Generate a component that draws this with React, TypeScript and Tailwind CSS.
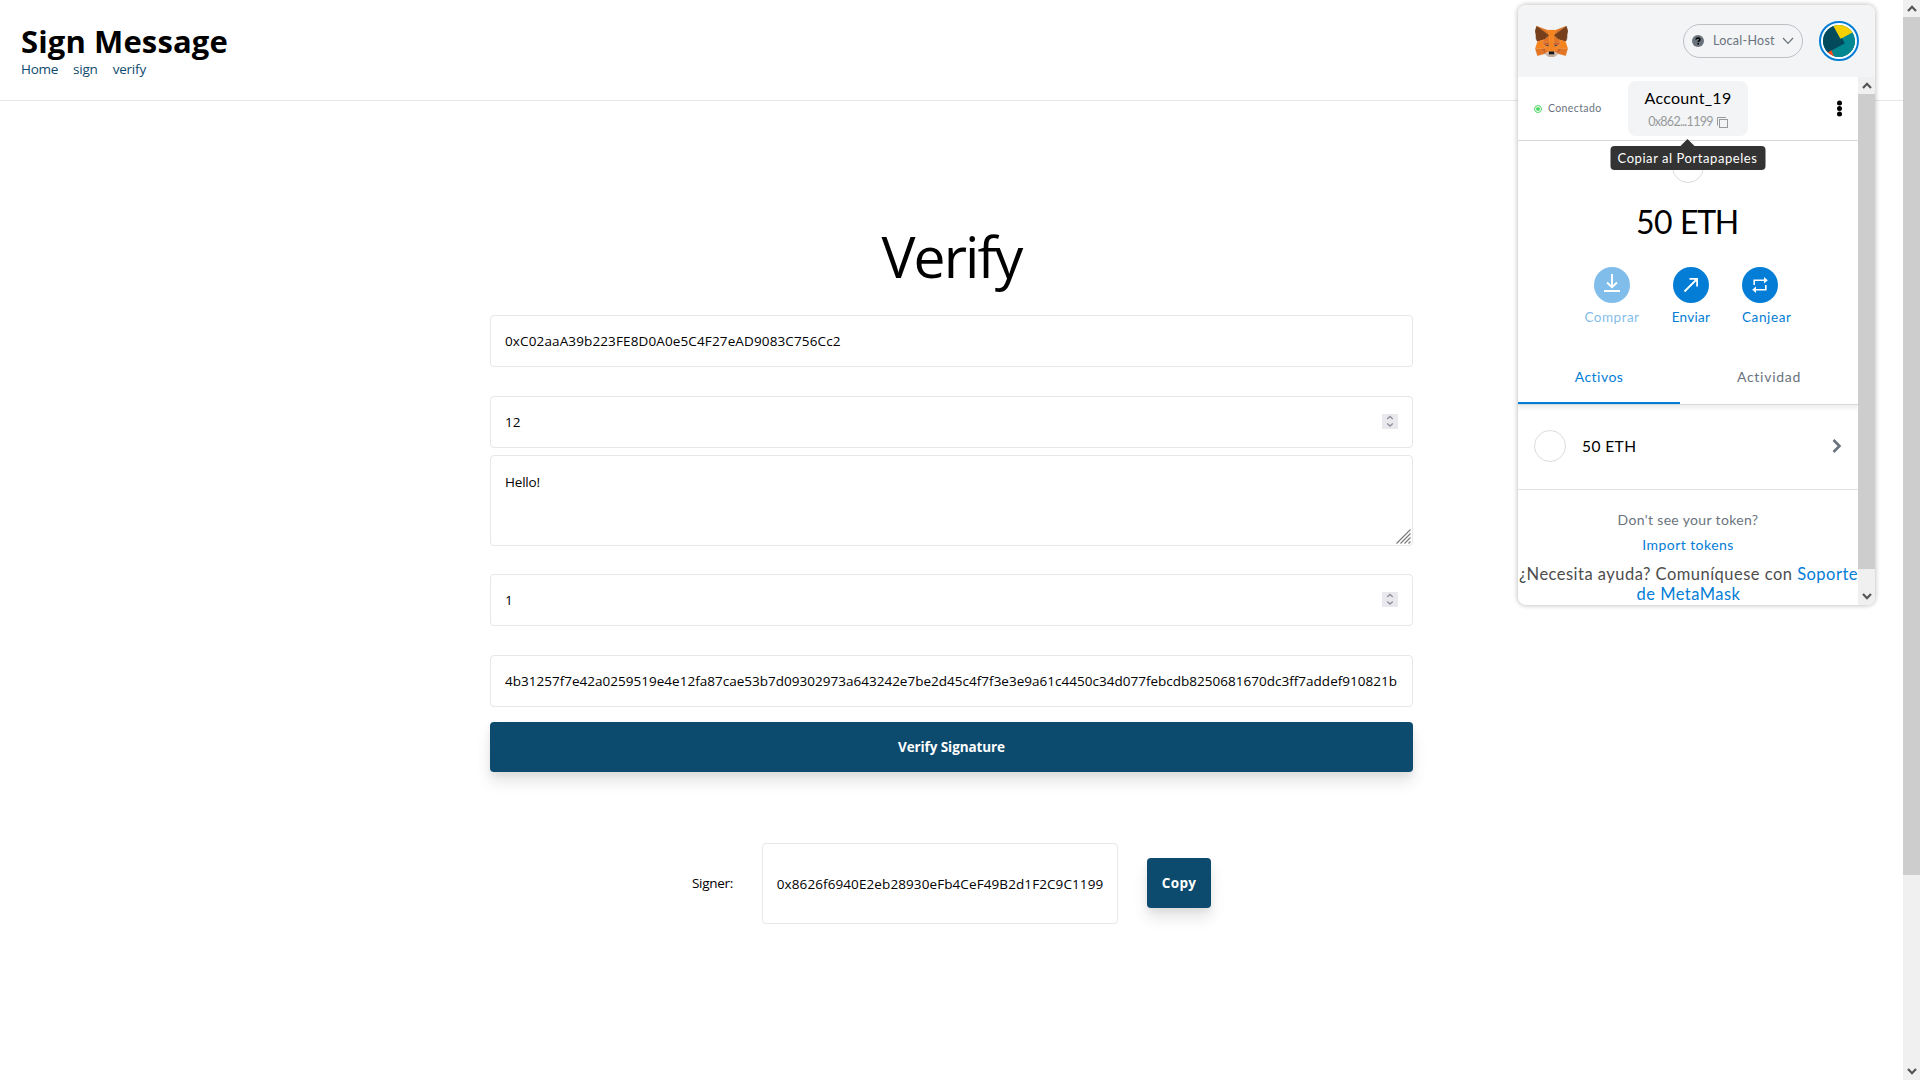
import type { ReactNode } from "react";

function Chevron({ up = false, className = "" }: { up?: boolean; className?: string }) {
  return (
    <svg viewBox="0 0 10 7" className={`h-[7px] w-[10px] shrink-0 ${className}`} fill="none" stroke="#555555" strokeWidth="2.2">
      <path d={up ? "M1 6 L5 1.8 L9 6" : "M1 1 L5 5.2 L9 1"} />
    </svg>
  );
}

function Scrollbar({ thumb, className = "" }: { thumb: string; className?: string }) {
  return (
    <div className={`flex w-[17px] shrink-0 flex-col bg-[#f0f0f0] ${className}`}>
      <div className="flex h-[17px] items-center justify-center">
        <Chevron up />
      </div>
      <div className={`bg-[#cdcdcd] ${thumb}`} />
      <div className="flex-1" />
      <div className="flex h-[17px] items-center justify-center">
        <Chevron />
      </div>
    </div>
  );
}

function Field({ children, spinner = false, className = "" }: { children: ReactNode; spinner?: boolean; className?: string }) {
  return (
    <div className={`flex h-[52px] items-center justify-between rounded border border-gray-200 pr-[14px] pl-[14px] ${className}`}>
      {children}
      {spinner && (
        <div className="mb-px flex h-[15px] w-4 items-center justify-center bg-[#e9e9ed]">
          <svg viewBox="0 0 16 15" className="h-[15px] w-4" fill="none" stroke="#8f8f9d" strokeWidth="1.3">
            <path d="M5.2 5 L8 2.4 L10.8 5 M5.2 9.4 L8 12 L10.8 9.4" />
          </svg>
        </div>
      )}
    </div>
  );
}

const foxShapes: [string, string][] = [
  ["#e17726", "M32.958 1 19.824 10.718 22.267 4.991Z"],
  ["#e27625", "M2.663 1 15.681 10.809 13.357 4.991Z"],
  ["#e27625", "M28.23 23.534 24.733 28.872 32.22 30.932 34.37 23.65Z"],
  ["#e27625", "M1.273 23.65 3.41 30.932 10.897 28.872 7.4 23.534Z"],
  ["#e27625", "M10.471 14.515 8.392 17.651 15.814 17.988 15.562 9.99Z"],
  ["#e27625", "M25.151 14.515 19.988 9.904 19.824 17.988 27.236 17.651Z"],
  ["#e27625", "M10.873 28.872 15.355 26.704 11.497 23.707Z"],
  ["#e27625", "M20.266 26.704 24.736 28.872 24.125 23.707Z"],
  ["#d5bfb2", "M24.735 28.872 20.265 26.704 20.628 29.607 20.589 30.839Z"],
  ["#d5bfb2", "M10.873 28.872 15.032 30.839 15.006 29.607 15.343 26.704Z"],
  ["#233447", "M15.109 21.784 11.383 20.696 14.015 19.49Z"],
  ["#233447", "M20.512 21.784 21.607 19.49 24.251 20.696Z"],
  ["#cc6228", "M10.873 28.872 11.522 23.534 7.4 23.65Z"],
  ["#cc6228", "M24.099 23.534 24.734 28.872 28.23 23.65Z"],
  ["#cc6228", "M27.237 17.651 19.824 17.988 20.512 21.784 21.606 19.49 24.251 20.696Z"],
  ["#cc6228", "M11.383 20.696 14.015 19.49 15.109 21.784 15.814 17.988 8.392 17.651Z"],
  ["#e27525", "M8.392 17.651 11.497 23.707 11.396 20.696Z"],
  ["#e27525", "M24.251 20.696 24.125 23.707 27.237 17.651Z"],
  ["#e27525", "M15.814 17.988 15.109 21.784 15.982 26.298 16.177 20.351Z"],
  ["#e27525", "M19.824 17.988 19.461 20.338 19.636 26.298 20.512 21.784Z"],
  ["#f5841f", "M20.512 21.784 19.636 26.298 20.265 26.704 24.125 23.707 24.251 20.696Z"],
  ["#f5841f", "M11.383 20.696 11.497 23.707 15.355 26.704 15.982 26.298 15.109 21.784Z"],
  ["#c0ac9d", "M20.589 30.839 20.628 29.607 20.291 29.322H15.319L15.006 29.607 15.032 30.839 10.873 28.872 12.326 30.061 15.28 32.1H20.343L23.31 30.061 24.736 28.872Z"],
  ["#161616", "M20.265 26.704 19.636 26.298H15.982L15.355 26.704 15.006 29.607 15.319 29.322H20.291L20.628 29.607Z"],
  ["#763e1a", "M33.517 11.353 34.621 5.986 32.958 1 20.265 10.394 25.151 14.515 32.05 16.525 33.569 14.747 32.907 14.267 33.962 13.307 33.154 12.684 34.21 11.878Z"],
  ["#763e1a", "M1 5.986 2.117 11.353 1.4 11.878 2.468 12.684 1.656 13.307 2.714 14.267 2.052 14.747 3.572 16.525 10.471 14.515 15.355 10.394 2.663 1Z"],
  ["#f5841f", "M32.05 16.525 25.151 14.515 27.237 17.651 24.125 23.707 28.23 23.655H34.37Z"],
  ["#f5841f", "M10.471 14.515 3.572 16.525 1.273 23.655H7.4L11.497 23.707 8.392 17.651Z"],
  ["#f5841f", "M19.824 17.988 20.265 10.394 22.267 4.991H13.357L15.355 10.394 15.814 17.988 15.982 20.364 15.995 26.298H19.636L19.649 20.364Z"],
];

function Fox() {
  return (
    <svg viewBox="1 1 33.6 31.1" preserveAspectRatio="none" className="h-[31px] w-[33px]">
      {foxShapes.map(([fill, d]) => (
        <path key={d} d={d} fill={fill} stroke={fill} strokeWidth="0.2" strokeLinejoin="round" />
      ))}
    </svg>
  );
}

function Avatar() {
  return (
    <div className="flex size-10 items-center justify-center rounded-full border-2 border-[#037dd6] bg-white">
      <svg viewBox="0 0 32 32" className="size-8 rounded-full">
        <rect width="32" height="32" fill="#018790" />
        <path d="M9 -1 L17.5 14 L34 5 V-2 Z" fill="#f5d000" />
        <path d="M3 27 L9 24 L13 34 H3 Z" fill="#fc4a14" />
        <path d="M10 0.5 L17.3 14 L18.8 13.3 L21.6 18.2 L5 27.2 L-2 28 V-2 H9 Z" fill="#034a5c" />
        <path d="M8.5 25.4 L32 13 V34 H12 Z" fill="#018790" />
        <path d="M18.8 13.3 L21.6 18.2 L8.5 25.4 L5 20 Z" fill="#034a5c" />
      </svg>
    </div>
  );
}

function Action({ label, icon, className }: { label: string; icon: ReactNode; className: string }) {
  return (
    <div className={`flex flex-col text-[13.5px] leading-5 text-[#037dd6] ${className}`}>
      <div className="flex size-9 items-center justify-center rounded-full bg-[#037dd6]">{icon}</div>
      <span className="mt-[4px] whitespace-nowrap">{label}</span>
    </div>
  );
}

function Wallet() {
  return (
    <div className="absolute top-[5px] left-[1518px] flex h-[600px] w-[357px] flex-col overflow-hidden rounded-lg bg-white font-['Lato',sans-serif] shadow-[0_0_4px_1px_rgba(0,0,0,0.22)]">
      <div className="flex h-[72px] shrink-0 items-center bg-[#f2f4f6] pr-4 pl-[17px]">
        <Fox />
        <div className="ml-auto flex h-[34px] w-[120px] items-center rounded-full border border-[#bbc0c5]">
          <svg viewBox="0 0 12 12" className="ml-2 size-3">
            <circle cx="6" cy="6" r="6" fill="#6a737d" />
            <path d="M4.1 4.6 C4.1 2.6 7.9 2.6 7.9 4.7 C7.9 5.9 6.2 5.9 6.2 7.1 M6.2 8.1 V9.5" fill="none" stroke="#000" strokeWidth="1.5" />
          </svg>
          <span className="mt-px ml-[9px] text-[12.5px] tracking-[0.27px] text-[#6a737d]">Local-Host</span>
          <svg viewBox="0 0 12 8" className="ml-[7px] h-2 w-3" fill="none" stroke="#6a737d" strokeWidth="1.2">
            <path d="M1 1 L6 6.4 L11 1" />
          </svg>
        </div>
        <div className="ml-4">
          <Avatar />
        </div>
      </div>

      <div className="flex min-h-0 flex-1">
        <div className="flex w-[340px] flex-col overflow-hidden">
          <div className="relative z-10 grid h-[64px] shrink-0 grid-cols-[110px_120px_110px] border-b border-[#d6d9dc]">
            <div className="flex items-center pl-4">
              <span className="flex size-2 items-center justify-center rounded-full border border-[#4cd964]">
                <span className="size-1 rounded-full bg-[#4cd964]" />
              </span>
              <span className="ml-[6px] text-[10.5px] tracking-[0.38px] text-[#6a737d]">Conectado</span>
            </div>
            <div className="relative mt-1 flex h-[55px] flex-col items-center rounded-lg bg-[#f2f4f6]">
              <span className="mt-[7px] text-[16px] leading-5 tracking-[0.29px] text-black">Account_19</span>
              <span className="mt-[5px] flex items-center text-[12.5px] leading-4 text-[#989a9b]">
                <span className="mt-px tracking-[-0.72px]">0x862...1199</span>
                <svg viewBox="0 0 11 11" className="mt-[2px] ml-1 size-[11px]" fill="none" stroke="#989a9b">
                  <path d="M0.5 8.5 V0.5 H9" />
                  <rect x="2.5" y="2.5" width="8" height="8" />
                </svg>
              </span>
              <div className="absolute top-[58px] left-[calc(50%-0.5px)] flex -translate-x-1/2 flex-col items-center">
                <div className="h-0 w-0 border-x-[7px] border-b-[7px] border-x-transparent border-b-[#333333]" />
                <div className="flex h-6 w-[155px] items-center justify-center rounded bg-[#333333] pt-px text-[13px] tracking-[0.56px] whitespace-nowrap text-white">
                  Copiar al Portapapeles
                </div>
              </div>
            </div>
            <div className="flex items-center justify-end pr-4">
              <svg viewBox="0 0 5 17" className="h-[17px] w-[5px]">
                <circle cx="2.5" cy="2.9" r="2.5" />
                <circle cx="2.5" cy="8.5" r="2.5" />
                <circle cx="2.5" cy="14.1" r="2.5" />
              </svg>
            </div>
          </div>

          <div className="flex h-[264px] shrink-0 flex-col items-center">
            <div className="mt-[10px] size-8 rounded-full border border-[#dcdcdc]" />
            <div className="mt-[19px] mr-[2px] flex h-10 items-center gap-[8px] text-[32px] leading-10 tracking-[-0.5px] text-black">
              <span>50</span>
              <span className="tracking-[-1.3px]">ETH</span>
            </div>
            <div className="mt-[25px] flex w-full pl-[66px]">
              <Action
                label="Comprar"
                className="w-[56px] items-center tracking-[0.48px] opacity-50"
                icon={
                  <svg viewBox="0 0 18 20" className="mb-1 h-5 w-[18px]" fill="none" stroke="#fff" strokeWidth="1.9">
                    <path d="M9 1 V14 M4 9.5 L9 14.3 L14 9.5 M1 18 H17" />
                  </svg>
                }
              />
              <Action
                label="Enviar"
                className="ml-[31px] w-[40px] items-center tracking-[0.28px]"
                icon={
                  <svg viewBox="0 0 16 16" className="size-4" fill="none" stroke="#fff" strokeWidth="1.8">
                    <path d="M1.5 14.5 L14 2 M6.5 1.9 H14.1 V9.5" />
                  </svg>
                }
              />
              <Action
                label="Canjear"
                className="ml-[31px] w-[50px] items-start tracking-[0.6px]"
                icon={
                  <svg viewBox="0 0 18 18" className="size-[18px]" fill="none" stroke="#fff" strokeWidth="1.6">
                    <path d="M3.2 9 V4.3 H14 M14.8 9 V13.7 H4" />
                    <path d="M13 1 L16.8 4.3 L13 7.6 Z M5 10.4 L1.2 13.7 L5 17 Z" fill="#fff" stroke="none" />
                  </svg>
                }
              />
            </div>
            <div className="mt-auto grid h-[54px] w-full shrink-0 grid-cols-[162px_178px] border-b border-[#d6d9dc] text-center text-[14px] shadow-[0_3px_5px_rgba(0,0,0,0.08)]">
              <span className="border-b-2 border-[#037dd6] pt-[16px] leading-5 tracking-[0.48px] text-[#037dd6]">Activos</span>
              <span className="pt-[16px] leading-5 tracking-[0.74px] text-[#6a737d]">Actividad</span>
            </div>
          </div>

          <div className="flex h-[85px] shrink-0 items-center border-b border-[#dfe1e3] px-4 pb-[2px]">
            <div className="size-8 rounded-full border border-[#dcdcdc]" />
            <span className="mt-px ml-4 text-[15.5px] tracking-[0.43px] text-black">50 ETH</span>
            <svg viewBox="0 0 10 14" className="ml-auto h-[14px] w-[10px]" fill="none" stroke="#6a737d" strokeWidth="2.6">
              <path d="M1.5 1 L7.5 7 L1.5 13" />
            </svg>
          </div>
          <div className="mt-[20px] text-center text-[14px] leading-5 tracking-[0.35px] text-[#6a737d]">Don't see your token?</div>
          <div className="mt-[5px] text-center text-[14px] leading-5 tracking-[0.44px] text-[#037dd6]">Import tokens</div>
          <div className="mt-[9px] ml-px text-center text-[16.5px] leading-5 tracking-[0.48px] whitespace-nowrap text-[#4d4d4d]">
            ¿Necesita ayuda? Comuníquese con <span className="text-[#037dd6]">Soporte</span>
            <div className="text-[#037dd6]">de MetaMask</div>
          </div>
        </div>
        <Scrollbar thumb="h-[475px]" />
      </div>
    </div>
  );
}

export default function App() {
  return (
    <div className="relative flex h-[1080px] w-[1920px] overflow-hidden bg-white font-['Open_Sans',sans-serif] text-[13.5px] text-black">
      <div className="flex w-[1903px] flex-col">
        <header className="flex h-[101px] flex-col border-b border-gray-200 pl-[21px]">
          <h1 className="mt-[23px] text-[31px] leading-9 font-bold tracking-[0.12px]">Sign Message</h1>
          <nav className="flex gap-[15px] leading-5 text-[#0d4b6e]">
            <a className="tracking-[-0.3px]">Home</a>
            <a className="tracking-[-0.2px]">sign</a>
            <a className="tracking-[-0.2px]">verify</a>
          </nav>
        </header>

        <main className="mx-auto mt-[125px] flex w-[923px] flex-col">
          <h2 className="text-center text-[57px] leading-[60px] tracking-[-1.9px]">Verify</h2>
          <Field className="mt-[29px]">
            <span className="tracking-[0.13px]">0xC02aaA39b223FE8D0A0e5C4F27eAD9083C756Cc2</span>
          </Field>
          <Field className="mt-[29px]" spinner>
            12
          </Field>
          <div className="relative mt-[7px] h-[91px] rounded border border-gray-200 px-[14px] py-[16px] leading-5">
            <span className="tracking-[-0.2px]">Hello!</span>
            <svg viewBox="0 0 15 15" className="absolute right-px bottom-px size-[15px]" stroke="#777" strokeWidth="1.1">
              <path d="M0.5 14.5 L14.5 0.5 M4.5 14.5 L14.5 4.5 M8.5 14.5 L14.5 8.5 M12.5 14.5 L14.5 12.5" />
            </svg>
          </div>
          <Field className="mt-[28px]" spinner>
            <span className="mt-px">1</span>
          </Field>
          <Field className="mt-[29px]">
            <span className="mt-px tracking-[0.017px] whitespace-nowrap">
              4b31257f7e42a0259519e4e12fa87cae53b7d09302973a643242e7be2d45c4f7f3e3e9a61c4450c34d077febcdb8250681670dc3ff7addef910821b
            </span>
          </Field>
          <button className="mt-[15px] h-[50px] rounded bg-[#0d4b6e] font-bold tracking-[-0.09px] text-white shadow-[0_10px_15px_rgba(0,0,0,0.1),0_4px_6px_rgba(0,0,0,0.05)]">
            Verify Signature
          </button>
          <div className="mt-[71px] flex items-center justify-center">
            <span className="tracking-[-0.28px]">Signer:</span>
            <div className="ml-[29px] flex h-[81px] w-[356px] items-center justify-center rounded border border-gray-200">
              <span className="mt-px tracking-[0.096px]">0x8626f6940E2eb28930eFb4CeF49B2d1F2C9C1199</span>
            </div>
            <button className="mb-px ml-[29px] h-[50px] w-16 rounded bg-[#0d4b6e] font-bold tracking-[0.4px] text-white shadow-[0_10px_15px_rgba(0,0,0,0.1),0_4px_6px_rgba(0,0,0,0.05)]">
              Copy
            </button>
          </div>
        </main>
      </div>
      <Scrollbar thumb="h-[858px]" />
      <Wallet />
    </div>
  );
}
